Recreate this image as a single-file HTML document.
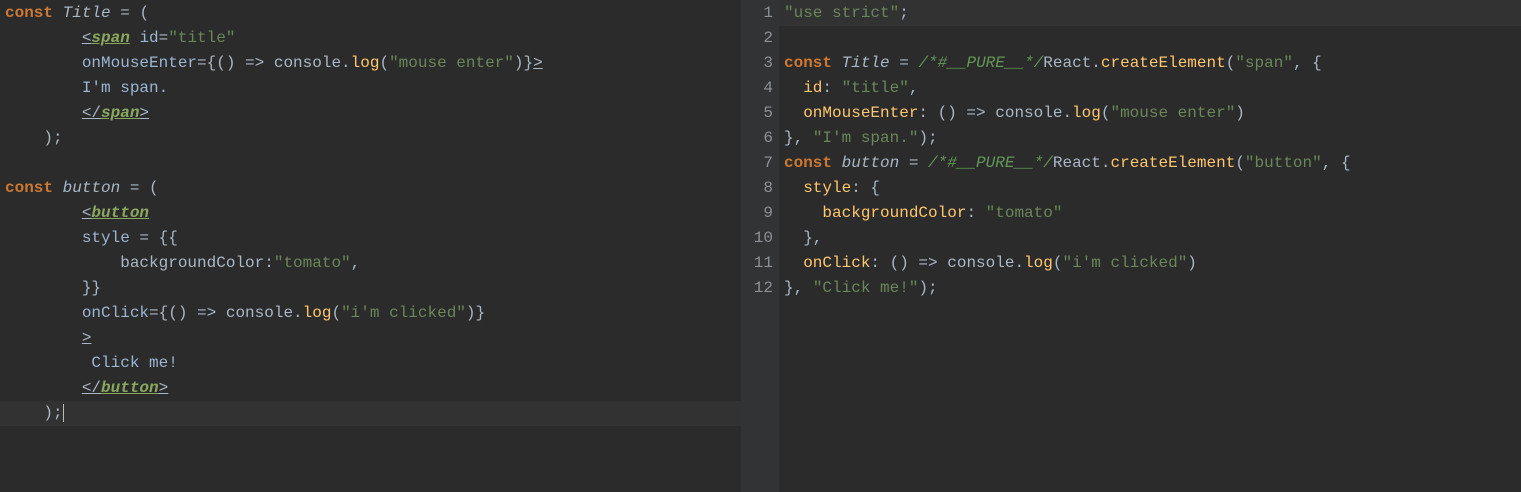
<!DOCTYPE html>
<html><head><meta charset="utf-8"><style>
body{margin:0;width:1521px;height:492px;background:#2b2b2b;overflow:hidden;font-family:"Liberation Mono",monospace;font-size:16px;}
.l{position:absolute;left:0;top:0;width:741px;height:492px;background:#2b2b2b;}
.g{position:absolute;left:741px;top:0;width:38px;height:492px;background:#313335;}
.r{position:absolute;left:779px;top:0;width:742px;height:492px;background:#2b2b2b;}
pre{margin:0;font:inherit;line-height:25px;white-space:pre;color:#a9b7c6;position:absolute;}
.k{color:#cc7832;font-weight:bold}
.i{font-style:italic}
.s{color:#6a8759}
.f{color:#ffc66d}
.c{color:#629755;font-style:italic}
.a{color:#9bb5d3}
.t{color:#8aa75e;font-style:italic;text-decoration:underline;font-weight:bold}
.u{text-decoration:underline}
.hl{position:absolute;height:25px;background:#323232;}
.n{color:#8d9195;text-align:right;width:32px;left:741px}
</style></head><body>
<div class="l"></div>
<div class="hl" style="left:0;top:401px;width:741px"></div>
<div class="g"></div>
<div class="r"></div>
<div class="hl" style="left:779px;top:0;width:742px;height:26px"></div>
<pre style="left:5px;top:1px"><span class="k">const</span> <span class="i">Title</span> = (
        <span class="u">&lt;</span><span class="t">span</span> <span class="a">id</span>=<span class="s">"title"</span>
        <span class="a">onMouseEnter</span>={() =&gt; console.<span class="f">log</span>(<span class="s">"mouse enter"</span>)}<span class="u">&gt;</span>
        <span class="a">I'm span.</span>
        <span class="u">&lt;/</span><span class="t">span</span><span class="u">&gt;</span>
    );

<span class="k">const</span> <span class="i">button</span> = (
        <span class="u">&lt;</span><span class="t">button</span>
        <span class="a">style</span> = {{
            backgroundColor:<span class="s">"tomato"</span>,
        }}
        <span class="a">onClick</span>={() =&gt; console.<span class="f">log</span>(<span class="s">"i'm clicked"</span>)}
        <span class="u">&gt;</span>
         <span class="a">Click me!</span>
        <span class="u">&lt;/</span><span class="t">button</span><span class="u">&gt;</span>
    );<span style="border-left:1px solid #bbb"></span></pre>
<pre class="n" style="top:1px">1
2
3
4
5
6
7
8
9
10
11
12</pre>
<pre style="left:784px;top:1px"><span class="s">"use strict"</span>;

<span class="k">const</span> <span class="i">Title</span> = <span class="c">/*#__PURE__*/</span>React.<span class="f">createElement</span>(<span class="s">"span"</span>, {
  <span class="f">id</span>: <span class="s">"title"</span>,
  <span class="f">onMouseEnter</span>: () =&gt; console.<span class="f">log</span>(<span class="s">"mouse enter"</span>)
}, <span class="s">"I'm span."</span>);
<span class="k">const</span> <span class="i">button</span> = <span class="c">/*#__PURE__*/</span>React.<span class="f">createElement</span>(<span class="s">"button"</span>, {
  <span class="f">style</span>: {
    <span class="f">backgroundColor</span>: <span class="s">"tomato"</span>
  },
  <span class="f">onClick</span>: () =&gt; console.<span class="f">log</span>(<span class="s">"i'm clicked"</span>)
}, <span class="s">"Click me!"</span>);</pre>
</body></html>
